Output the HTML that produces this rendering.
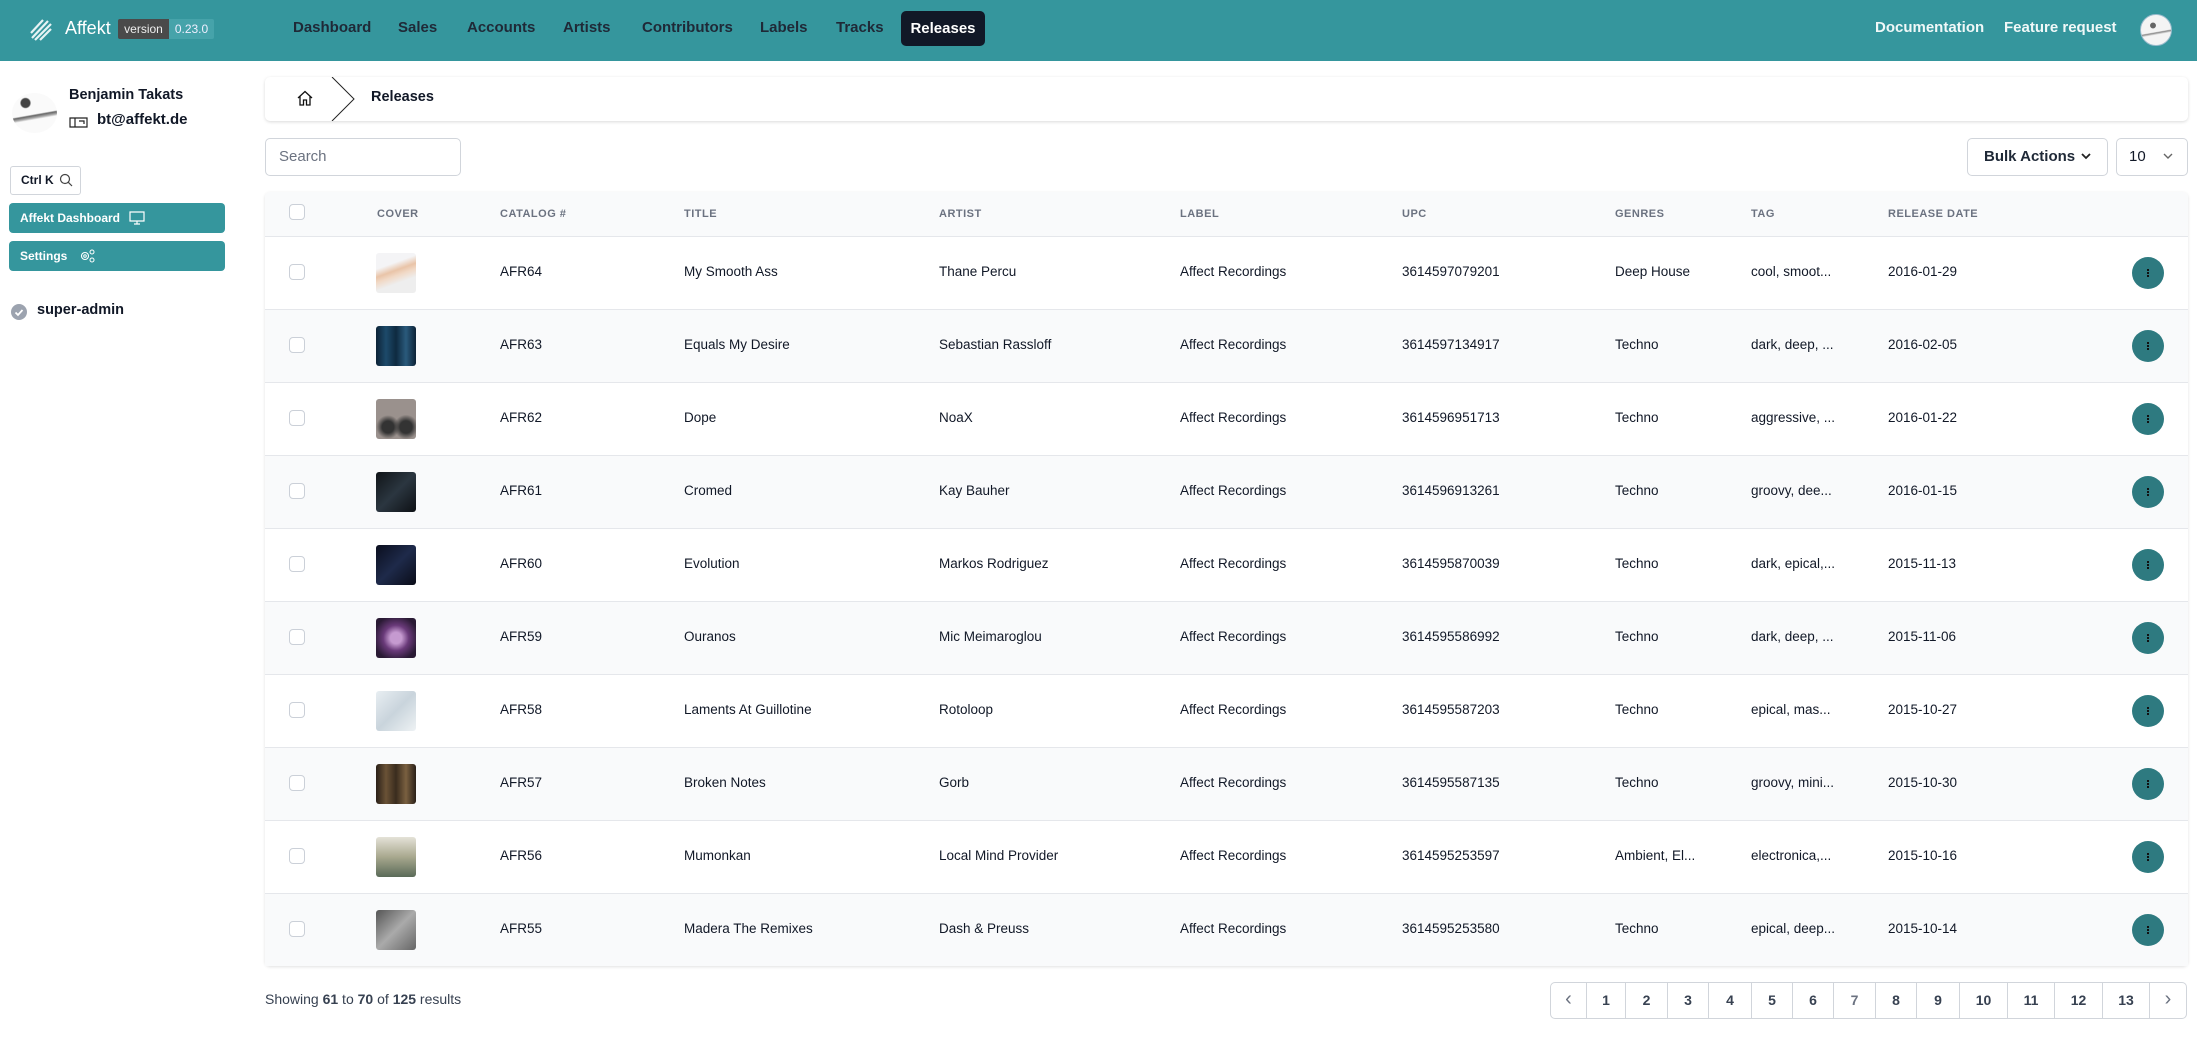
<!DOCTYPE html>
<html><head><meta charset="utf-8"><style>
*{box-sizing:border-box;margin:0;padding:0}
body{width:2197px;height:1055px;overflow:hidden;background:#fff;font-family:"Liberation Sans",sans-serif;color:#111827;position:relative;font-size:14px}
.abs{position:absolute}
.hdr{left:0;top:0;width:2197px;height:61px;background:#35969d}
.nav{top:19px;font-size:15px;font-weight:bold;color:#1f2937}
.btn{background:#35969d;color:#fff;font-weight:bold;font-size:12px;border-radius:4px;padding-left:11px;line-height:30px}
.th{top:208px;font-size:11px;font-weight:bold;color:#6b7280;letter-spacing:.5px}
.row{left:265px;width:1923px;height:73px;border-top:1px solid #e5e7eb}
.row span{position:absolute;top:27px;font-size:13.5px;color:#111827}
.cb{position:absolute;width:16px;height:16px;border:1px solid #cbd0d8;border-radius:4px;background:#fff}
.cov{position:absolute;top:16px;left:111px;width:40px;height:40px;border-radius:3px}
.act{position:absolute;left:1867px;top:20px;width:32px;height:32px;border-radius:50%;background:#2e7a80}
.act:after{content:"";position:absolute;left:15px;top:12px;width:2px;height:8px;background:repeating-linear-gradient(#111 0 2px,transparent 2px 3px)}
.pg{top:982px;height:37px;border:1px solid #d1d5db;border-left:none;text-align:center;line-height:35px;font-weight:bold;font-size:14px;color:#374151}
.ar{font-size:20px;font-weight:normal;line-height:33px}
</style></head><body>
<div class="abs hdr"></div>
<svg class="abs" style="left:30px;top:19px" width="22" height="22" viewBox="0 0 22 22"><g stroke="#e6f3f4" stroke-width="2.2"><line x1="1" y1="14" x2="13" y2="1"/><line x1="2" y1="19" x2="18" y2="2"/><line x1="5" y1="21" x2="21" y2="5"/><line x1="10" y1="21" x2="21" y2="10"/></g></svg>
<div class="abs" style="left:65px;top:18px;font-size:18px;color:#fff">Affekt</div>
<div class="abs" style="left:118px;top:19px;height:20px;width:51px;background:#4a4a4a;color:#eee;font-size:12px;line-height:20px;text-align:center;border-radius:2px 0 0 2px">version</div>
<div class="abs" style="left:169px;top:19px;height:20px;width:45px;background:#46a3aa;color:#eef;font-size:12px;line-height:20px;text-align:center;border-radius:0 2px 2px 0">0.23.0</div>
<div class="abs nav" style="left:293px">Dashboard</div>
<div class="abs nav" style="left:398px">Sales</div>
<div class="abs nav" style="left:467px">Accounts</div>
<div class="abs nav" style="left:563px">Artists</div>
<div class="abs nav" style="left:642px">Contributors</div>
<div class="abs nav" style="left:760px">Labels</div>
<div class="abs nav" style="left:836px">Tracks</div>
<div class="abs" style="left:901px;top:11px;width:84px;height:35px;background:#111827;border-radius:5px;color:#fff;font-weight:bold;font-size:15px;text-align:center;line-height:35px">Releases</div>
<div class="abs nav" style="left:1875px;color:#f0f8f8">Documentation</div>
<div class="abs nav" style="left:2004px;color:#f0f8f8">Feature request</div>
<div class="abs" style="left:2140px;top:14px;width:32px;height:32px;border-radius:50%;background:radial-gradient(circle at 40% 35%,#666 0 10%,transparent 12%),linear-gradient(170deg,transparent 55%,#888 58%,transparent 64%),#f4f4f4;border:1px solid #9bc"></div>

<!-- sidebar -->
<div class="abs" style="left:12px;top:93px;width:45px;height:40px;border-radius:50%;background:radial-gradient(circle at 30% 25%,#444 0 10%,transparent 13%),linear-gradient(170deg,transparent 52%,#666 55%,#aaa 60%,transparent 64%),#fafafa"></div>
<div class="abs" style="left:69px;top:87px;font-size:14.5px;font-weight:bold">Benjamin Takats</div>
<svg class="abs" style="left:69px;top:114px" width="19" height="14" viewBox="0 0 19 14"><path d="M1 4h17v9H1zM6 4v9M10 7h5v3" fill="none" stroke="#222" stroke-width="1.2"/></svg>
<div class="abs" style="left:97px;top:111px;font-size:15px;font-weight:bold">bt@affekt.de</div>
<div class="abs" style="left:10px;top:166px;width:71px;height:29px;border:1px solid #d1d5db;border-radius:3px;font-size:12px;font-weight:bold;line-height:27px;padding-left:10px">Ctrl K</div>
<svg class="abs" style="left:59px;top:173px" width="14" height="14" viewBox="0 0 14 14"><circle cx="6" cy="6" r="4.5" fill="none" stroke="#444" stroke-width="1.2"/><line x1="9.3" y1="9.3" x2="13" y2="13" stroke="#444" stroke-width="1.2"/></svg>
<div class="abs btn" style="left:9px;top:203px;width:216px">Affekt Dashboard</div>
<svg class="abs" style="left:129px;top:211px" width="16" height="14" viewBox="0 0 16 14"><path d="M1 1h14v9H1zM8 10v3M5 13h6" fill="none" stroke="#fff" stroke-width="1.2"/></svg>
<div class="abs btn" style="left:9px;top:241px;width:216px">Settings</div>
<svg class="abs" style="left:80px;top:249px" width="16" height="14" viewBox="0 0 16 14"><circle cx="5" cy="7" r="3.5" fill="none" stroke="#fff" stroke-width="1.1"/><circle cx="5" cy="7" r="1.3" fill="none" stroke="#fff"/><circle cx="12" cy="3" r="2" fill="none" stroke="#fff"/><circle cx="12" cy="11" r="2" fill="none" stroke="#fff"/></svg>
<div class="abs" style="left:11px;top:304px;width:16px;height:16px;border-radius:50%;background:#9ca3af"></div>
<svg class="abs" style="left:11px;top:304px" width="16" height="16"><path d="M4.5 8.5l2.5 2.5 4.5-5" fill="none" stroke="#fff" stroke-width="1.8"/></svg>
<div class="abs" style="left:37px;top:302px;font-size:14.5px;font-weight:bold">super-admin</div>

<!-- breadcrumb -->
<div class="abs" style="left:265px;top:77px;width:1923px;height:44px;background:#fff;border-radius:5px;box-shadow:0 1px 3px rgba(0,0,0,.15)"></div>
<svg class="abs" style="left:297px;top:90px" width="16" height="16" viewBox="0 0 16 16"><path d="M1 8L8 1.5 15 8M3 6.5V15h3.5v-5h3v5H13V6.5" fill="none" stroke="#111" stroke-width="1.3"/></svg>
<svg class="abs" style="left:330px;top:77px" width="25" height="44"><path d="M2 0L24 22 2 44" fill="none" stroke="#222" stroke-width="1"/></svg>
<div class="abs" style="left:371px;top:89px;font-size:14.5px;font-weight:bold">Releases</div>

<div class="abs" style="left:265px;top:138px;width:196px;height:38px;border:1px solid #d1d5db;border-radius:5px;color:#6b7280;font-size:15px;line-height:36px;padding-left:13px">Search</div>
<div class="abs" style="left:1967px;top:138px;width:141px;height:38px;border:1px solid #d1d5db;border-radius:5px;font-size:15px;font-weight:bold;color:#1f2937;line-height:36px;padding-left:16px">Bulk Actions</div>
<svg class="abs" style="left:2080px;top:152px" width="12" height="10"><path d="M2 2l4 4 4-4" fill="none" stroke="#222" stroke-width="1.8"/></svg>
<div class="abs" style="left:2116px;top:138px;width:72px;height:38px;border:1px solid #d1d5db;border-radius:5px;font-size:15px;line-height:36px;padding-left:12px">10</div>
<svg class="abs" style="left:2162px;top:152px" width="12" height="10"><path d="M2 2l4 4 4-4" fill="none" stroke="#666" stroke-width="1.4"/></svg>

<!-- table -->
<div class="abs" style="left:265px;top:192px;width:1923px;height:774px;border-radius:5px;box-shadow:0 1px 3px rgba(0,0,0,.12);background:#fff"></div>
<div class="abs" style="left:265px;top:192px;width:1923px;height:44px;background:#f9fafb;border-radius:5px 5px 0 0"></div>
<div class="cb" style="left:289px;top:204px"></div>
<div class="abs th" style="left:377px">COVER</div>
<div class="abs th" style="left:500px">CATALOG #</div>
<div class="abs th" style="left:684px">TITLE</div>
<div class="abs th" style="left:939px">ARTIST</div>
<div class="abs th" style="left:1180px">LABEL</div>
<div class="abs th" style="left:1402px">UPC</div>
<div class="abs th" style="left:1615px">GENRES</div>
<div class="abs th" style="left:1751px">TAG</div>
<div class="abs th" style="left:1888px">RELEASE DATE</div>

<div class="abs row" style="top:236px;background:#fff"><div class="cb" style="left:24px;top:27px"></div><div class="cov" style="background:linear-gradient(160deg,#f4f4f6 30%,#e9c4a8 45%,#f1d9c6 55%,#eee 70%)"></div><span style="left:235px">AFR64</span><span style="left:419px">My Smooth Ass</span><span style="left:674px">Thane Percu</span><span style="left:915px">Affect Recordings</span><span style="left:1137px">3614597079201</span><span style="left:1350px">Deep House</span><span style="left:1486px">cool, smoot...</span><span style="left:1623px">2016-01-29</span><div class="act"></div></div>
<div class="abs row" style="top:309px;background:#f9fafb"><div class="cb" style="left:24px;top:27px"></div><div class="cov" style="background:linear-gradient(90deg,#0c2236,#1d4a6a,#0e2a40,#2a5a7c,#0c2236)"></div><span style="left:235px">AFR63</span><span style="left:419px">Equals My Desire</span><span style="left:674px">Sebastian Rassloff</span><span style="left:915px">Affect Recordings</span><span style="left:1137px">3614597134917</span><span style="left:1350px">Techno</span><span style="left:1486px">dark, deep, ...</span><span style="left:1623px">2016-02-05</span><div class="act"></div></div>
<div class="abs row" style="top:382px;background:#fff"><div class="cb" style="left:24px;top:27px"></div><div class="cov" style="background:radial-gradient(circle at 30% 70%,#333 0 15%,transparent 30%),radial-gradient(circle at 75% 70%,#333 0 15%,transparent 30%),#9a918d"></div><span style="left:235px">AFR62</span><span style="left:419px">Dope</span><span style="left:674px">NoaX</span><span style="left:915px">Affect Recordings</span><span style="left:1137px">3614596951713</span><span style="left:1350px">Techno</span><span style="left:1486px">aggressive, ...</span><span style="left:1623px">2016-01-22</span><div class="act"></div></div>
<div class="abs row" style="top:455px;background:#f9fafb"><div class="cb" style="left:24px;top:27px"></div><div class="cov" style="background:linear-gradient(135deg,#101418,#2b3640,#0d1014)"></div><span style="left:235px">AFR61</span><span style="left:419px">Cromed</span><span style="left:674px">Kay Bauher</span><span style="left:915px">Affect Recordings</span><span style="left:1137px">3614596913261</span><span style="left:1350px">Techno</span><span style="left:1486px">groovy, dee...</span><span style="left:1623px">2016-01-15</span><div class="act"></div></div>
<div class="abs row" style="top:528px;background:#fff"><div class="cb" style="left:24px;top:27px"></div><div class="cov" style="background:linear-gradient(135deg,#0a0e1e,#1e2a4a,#0a0c18)"></div><span style="left:235px">AFR60</span><span style="left:419px">Evolution</span><span style="left:674px">Markos Rodriguez</span><span style="left:915px">Affect Recordings</span><span style="left:1137px">3614595870039</span><span style="left:1350px">Techno</span><span style="left:1486px">dark, epical,...</span><span style="left:1623px">2015-11-13</span><div class="act"></div></div>
<div class="abs row" style="top:601px;background:#f9fafb"><div class="cb" style="left:24px;top:27px"></div><div class="cov" style="background:radial-gradient(circle at 50% 50%,#c59ad0 0 20%,#6a3a7a 45%,#2a1a34 80%)"></div><span style="left:235px">AFR59</span><span style="left:419px">Ouranos</span><span style="left:674px">Mic Meimaroglou</span><span style="left:915px">Affect Recordings</span><span style="left:1137px">3614595586992</span><span style="left:1350px">Techno</span><span style="left:1486px">dark, deep, ...</span><span style="left:1623px">2015-11-06</span><div class="act"></div></div>
<div class="abs row" style="top:674px;background:#fff"><div class="cb" style="left:24px;top:27px"></div><div class="cov" style="background:linear-gradient(135deg,#e8eef2,#c9d4dc,#eef2f4)"></div><span style="left:235px">AFR58</span><span style="left:419px">Laments At Guillotine</span><span style="left:674px">Rotoloop</span><span style="left:915px">Affect Recordings</span><span style="left:1137px">3614595587203</span><span style="left:1350px">Techno</span><span style="left:1486px">epical, mas...</span><span style="left:1623px">2015-10-27</span><div class="act"></div></div>
<div class="abs row" style="top:747px;background:#f9fafb"><div class="cb" style="left:24px;top:27px"></div><div class="cov" style="background:linear-gradient(90deg,#2a2018,#6a5236,#3a2c1e,#7a6040,#2a2018)"></div><span style="left:235px">AFR57</span><span style="left:419px">Broken Notes</span><span style="left:674px">Gorb</span><span style="left:915px">Affect Recordings</span><span style="left:1137px">3614595587135</span><span style="left:1350px">Techno</span><span style="left:1486px">groovy, mini...</span><span style="left:1623px">2015-10-30</span><div class="act"></div></div>
<div class="abs row" style="top:820px;background:#fff"><div class="cb" style="left:24px;top:27px"></div><div class="cov" style="background:linear-gradient(180deg,#e4e2d8,#a8a88e 50%,#5a6a58)"></div><span style="left:235px">AFR56</span><span style="left:419px">Mumonkan</span><span style="left:674px">Local Mind Provider</span><span style="left:915px">Affect Recordings</span><span style="left:1137px">3614595253597</span><span style="left:1350px">Ambient, El...</span><span style="left:1486px">electronica,...</span><span style="left:1623px">2015-10-16</span><div class="act"></div></div>
<div class="abs row" style="top:893px;background:#f9fafb"><div class="cb" style="left:24px;top:27px"></div><div class="cov" style="background:linear-gradient(135deg,#555,#aaa,#666)"></div><span style="left:235px">AFR55</span><span style="left:419px">Madera The Remixes</span><span style="left:674px">Dash &amp; Preuss</span><span style="left:915px">Affect Recordings</span><span style="left:1137px">3614595253580</span><span style="left:1350px">Techno</span><span style="left:1486px">epical, deep...</span><span style="left:1623px">2015-10-14</span><div class="act"></div></div>

<div class="abs" style="left:265px;top:991px;font-size:14px;color:#374151">Showing <b>61</b> to <b>70</b> of <b>125</b> results</div>
<div class="abs pg ar" style="left:1550px;width:37px;border-left:1px solid #d1d5db;border-radius:5px 0 0 5px;color:#6b7280">‹</div>
<div class="abs pg" style="left:1587px;width:39px">1</div>
<div class="abs pg" style="left:1626px;width:42px">2</div>
<div class="abs pg" style="left:1668px;width:41px">3</div>
<div class="abs pg" style="left:1709px;width:43px">4</div>
<div class="abs pg" style="left:1752px;width:41px">5</div>
<div class="abs pg" style="left:1793px;width:41px">6</div>
<div class="abs pg" style="left:1834px;width:42px;color:#6b7280">7</div>
<div class="abs pg" style="left:1876px;width:41px">8</div>
<div class="abs pg" style="left:1917px;width:43px">9</div>
<div class="abs pg" style="left:1960px;width:48px">10</div>
<div class="abs pg" style="left:2008px;width:47px">11</div>
<div class="abs pg" style="left:2055px;width:48px">12</div>
<div class="abs pg" style="left:2103px;width:47px">13</div>
<div class="abs pg ar" style="left:2150px;width:37px;border-radius:0 5px 5px 0;color:#6b7280">›</div>
</body></html>
